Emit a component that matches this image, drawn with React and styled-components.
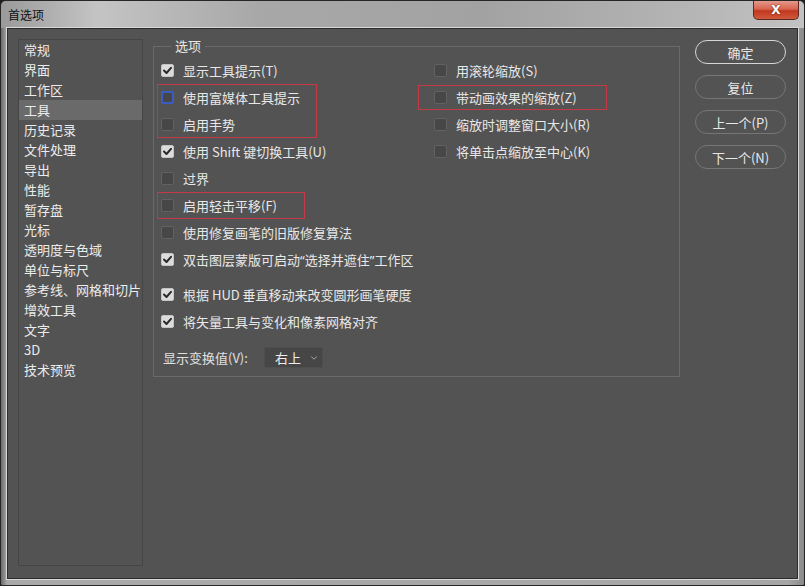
import React from "react";
import styled, { createGlobalStyle } from "styled-components";
import { ChevronDown } from "lucide-react";

const GlobalStyle = createGlobalStyle`
  html, body {
    margin: 0;
    padding: 0;
    background: #1e1e1e;
  }
  body {
    font-family: "Noto Sans CJK SC", "Noto Sans", sans-serif;
  }
`;

const sidebarItems = [
  "常规",
  "界面",
  "工作区",
  "工具",
  "历史记录",
  "文件处理",
  "导出",
  "性能",
  "暂存盘",
  "光标",
  "透明度与色域",
  "单位与标尺",
  "参考线、网格和切片",
  "增效工具",
  "文字",
  "3D",
  "技术预览",
];

const Window = styled.div`
  width: 805px;
  height: 586px;
  box-sizing: border-box;
  display: flex;
  flex-direction: column;
  border: 1px solid #262626;
  border-radius: 6px 6px 2px 2px;
  background: linear-gradient(to right, #6a6a6a 0px, #a9a9a9 6px, #a6a6a6 98%, #8a8a8a 100%);
  padding: 0 6px 6px 6px;
  overflow: hidden;
`;

const TitleBar = styled.div`
  height: 27px;
  margin: 0 -6px;
  padding: 0 5px 0 7px;
  display: flex;
  justify-content: space-between;
  align-items: flex-start;
  background: linear-gradient(
    to right,
    #9a9a9a 0%,
    #c4c4c4 12%,
    #a8a8a8 32%,
    #a2a2a2 60%,
    #b4b4b4 85%,
    #c2c2c2 100%
  );
`;

const Title = styled.span`
  font-size: 12px;
  line-height: 27px;
  color: #111;
`;

const CloseButton = styled.div`
  width: 46px;
  height: 19px;
  box-sizing: border-box;
  border: 1px solid #5c2a22;
  border-top: none;
  border-radius: 0 0 5px 5px;
  background: linear-gradient(to bottom, #e49a8a 0%, #d86450 45%, #c2361f 55%, #cf5a3c 100%);
  display: flex;
  align-items: center;
  justify-content: center;
  color: #fff;
  font-family: "DejaVu Sans", sans-serif;
  font-weight: bold;
  font-size: 12px;
  text-shadow: 0 0 2px #5a1a10;
`;

const Client = styled.div`
  flex: 1;
  display: flex;
  align-items: flex-start;
  gap: 10px;
  background: #535353;
  border: 1px solid #2c2c2c;
  box-shadow: 0 0 0 1px #d8d8d8;
  padding: 10px 11px 11px 10px;
  min-height: 0;
`;

const Sidebar = styled.div`
  width: 125px;
  height: 527px;
  box-sizing: border-box;
  border: 1px solid #454545;
  display: flex;
  flex-direction: column;
  flex-shrink: 0;
`;

const SidebarItem = styled.div`
  height: 20px;
  line-height: 20px;
  padding-left: 5px;
  font-size: 13px;
  color: #ececec;
  background: ${(p) => (p.$active ? "#6a6a6a" : "transparent")};
`;

const Group = styled.fieldset`
  width: 527px;
  box-sizing: border-box;
  margin: 0;
  padding: 4px 0 8px 7px;
  border: 1px solid #6a6a6a;
  flex-shrink: 0;
`;

const Legend = styled.legend`
  margin-left: 10px;
  padding: 0 4px;
  font-size: 13px;
  line-height: 14px;
  color: #e8e8e8;
`;

const Columns = styled.div`
  display: flex;
`;

const Column = styled.div`
  width: ${(p) => p.$width || "auto"};
  display: flex;
  flex-direction: column;
`;

const Row = styled.div`
  height: 27px;
  display: flex;
  align-items: center;
  gap: 9px;
  font-size: 13px;
  color: #e8e8e8;
  white-space: nowrap;
  margin-top: ${(p) => p.$gapTop || 0}px;
`;

const Quote = styled.span`
  font-family: "Noto Sans", sans-serif;
`;

const Highlight = styled.div`
  width: ${(p) => p.$width}px;
  margin-left: -${(p) => p.$inset}px;
  padding-left: ${(p) => p.$inset}px;
  box-sizing: border-box;
  outline: 1px solid #c23a45;
  outline-offset: ${(p) => p.$offset || -1}px;
`;

const Box = styled.span`
  width: 13px;
  height: 13px;
  box-sizing: border-box;
  border-radius: 2px;
  flex-shrink: 0;
  display: flex;
  align-items: center;
  justify-content: center;
  background: ${(p) => (p.$checked ? "#dcdcdc" : "#474747")};
  border: ${(p) =>
    p.$focus ? "2px solid #3c5cc2" : p.$checked ? "1px solid #c4c4c4" : "1px solid #626262"};
`;

const SelectRow = styled.div`
  display: flex;
  align-items: center;
  gap: 16px;
  margin: 12px 0 0 2px;
  font-size: 13px;
  color: #e0e0e0;
`;

const Select = styled.div`
  width: 59px;
  height: 21px;
  box-sizing: border-box;
  background: #464646;
  border: 1px solid #4e4e4e;
  display: flex;
  align-items: center;
  justify-content: space-between;
  padding: 0 3px 0 10px;
  color: #eeeeee;
  font-size: 13px;
`;

const Buttons = styled.div`
  display: flex;
  flex-direction: column;
  gap: 11px;
  padding-top: 1px;
  margin-left: 5px;
`;

const Button = styled.div`
  width: 91px;
  height: 24px;
  box-sizing: border-box;
  border-radius: 12px;
  border: 1px solid ${(p) => (p.$primary ? "#d6d6d6" : "#767676")};
  display: flex;
  align-items: center;
  justify-content: center;
  font-size: 13px;
  color: #e8e8e8;
`;

const Check = ({ checked, focus }) => (
  <Box $checked={checked} $focus={focus}>
    {checked && (
      <svg width="11" height="11" viewBox="0 0 11 11">
        <polyline
          points="2,5.5 4.5,8 9,2.8"
          fill="none"
          stroke="#2a2a2a"
          strokeWidth="2"
          strokeLinecap="round"
          strokeLinejoin="round"
        />
      </svg>
    )}
  </Box>
);

const Option = ({ checked, focus, label, gapTop }) => (
  <Row $gapTop={gapTop}>
    <Check checked={checked} focus={focus} />
    <span>{label}</span>
  </Row>
);

export default function App() {
  return (
    <>
      <GlobalStyle />
      <Window>
        <TitleBar>
          <Title>首选项</Title>
          <CloseButton>X</CloseButton>
        </TitleBar>
        <Client>
          <Sidebar>
            {sidebarItems.map((item) => (
              <SidebarItem key={item} $active={item === "工具"}>
                {item}
              </SidebarItem>
            ))}
          </Sidebar>
          <Group>
            <Legend>选项</Legend>
            <Columns>
              <Column $width="273px">
                <Option checked label="显示工具提示(T)" />
                <Highlight $width={160} $inset={4}>
                  <Option focus label="使用富媒体工具提示" />
                  <Option label="启用手势" />
                </Highlight>
                <Option checked label="使用 Shift 键切换工具(U)" />
                <Option label="过界" />
                <Highlight $width={148} $inset={4}>
                  <Option label="启用轻击平移(F)" />
                </Highlight>
                <Option label="使用修复画笔的旧版修复算法" />
                <Option
                  checked
                  label={
                    <>
                      双击图层蒙版可启动<Quote>“</Quote>选择并遮住<Quote>”</Quote>工作区
                    </>
                  }
                />
                <Option checked gapTop={8} label="根据 HUD 垂直移动来改变圆形画笔硬度" />
                <Option checked label="将矢量工具与变化和像素网格对齐" />
              </Column>
              <Column>
                <Option label="用滚轮缩放(S)" />
                <Highlight $width={191} $inset={17} $offset={-2}>
                  <Option label="带动画效果的缩放(Z)" />
                </Highlight>
                <Option label="缩放时调整窗口大小(R)" />
                <Option label="将单击点缩放至中心(K)" />
              </Column>
            </Columns>
            <SelectRow>
              <span>显示变换值(V):</span>
              <Select>
                <span>右上</span>
                <ChevronDown size={10} color="#b8b8b8" />
              </Select>
            </SelectRow>
          </Group>
          <Buttons>
            <Button $primary>确定</Button>
            <Button>复位</Button>
            <Button>上一个(P)</Button>
            <Button>下一个(N)</Button>
          </Buttons>
        </Client>
      </Window>
    </>
  );
}
